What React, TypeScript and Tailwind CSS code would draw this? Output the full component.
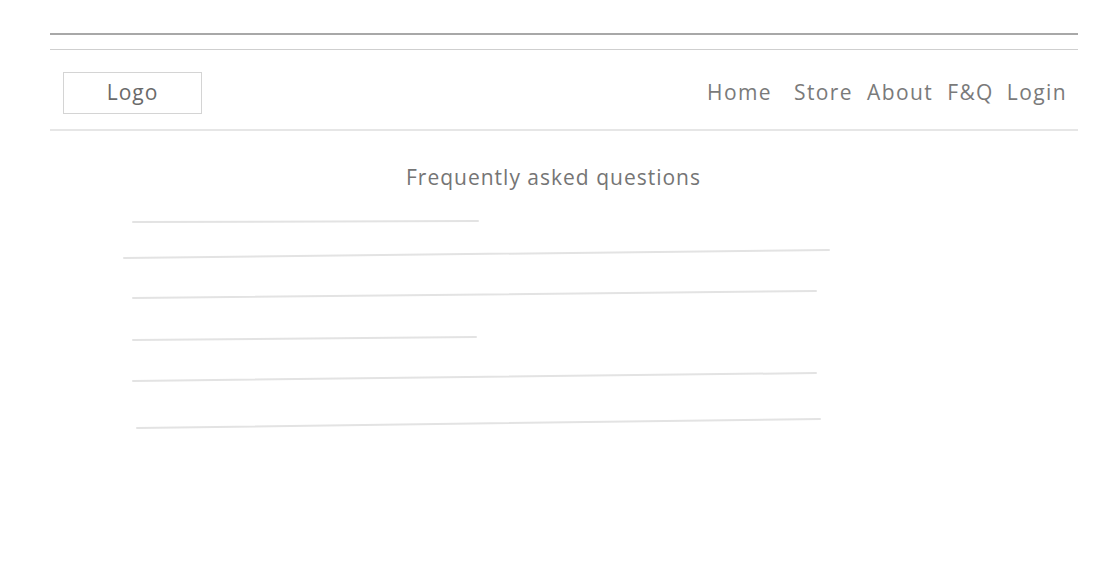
const LINES = [
  { x1: 133, y1: 222, x2: 478, y2: 221 },
  { x1: 124, y1: 258, x2: 829, y2: 250 },
  { x1: 133, y1: 298, x2: 816, y2: 291 },
  { x1: 133, y1: 340, x2: 476, y2: 337 },
  { x1: 133, y1: 381, x2: 816, y2: 373 },
  { x1: 137, y1: 428, x2: 820, y2: 419 },
];

const NAV = [
  { label: "Home", cls: "mr-[22px]" },
  { label: "Store", cls: "mr-[14px]" },
  { label: "About", cls: "mr-[14px]" },
  { label: "F&Q", cls: "mr-[13px]" },
  { label: "Login", cls: "" },
];

export default function App() {
  return (
    <div
      className="w-[1113px] h-[587px] bg-white overflow-hidden text-[#6f6f6f]"
      style={{ fontFamily: '"Open Sans", "Noto Sans", sans-serif' }}
    >
      <div className="ml-[50px] w-[1028px] pt-[33px]">
        {/* double rule at top */}
        <div className="h-[2px] bg-[#a8a8a8]" />
        <div className="mt-[14px] h-px bg-[#cfcfcf]" />

        {/* header */}
        <div className="flex items-center justify-between h-[79px] pt-[7px] pl-[13px] pr-[11px]">
          <div className="w-[139px] h-[42px] border border-[#d4d4d4] flex items-center justify-center text-[21px] tracking-[1px] text-[#6a6a6a]">
            Logo
          </div>
          <nav className="flex items-center text-[21px] tracking-[1.4px] text-[#7a7a7a]">
            {NAV.map((n) => (
              <span key={n.label} className={n.cls}>
                {n.label}
              </span>
            ))}
          </nav>
        </div>
        <div className="h-[2px] bg-[#e6e6e6]" />
      </div>

      {/* content */}
      <div className="pt-[32px] flex justify-center pr-[6px]">
        <h1 className="text-[21px] leading-[28px] tracking-[1px] text-[#757575]">Frequently asked questions</h1>
      </div>

      {/* placeholder sketch lines */}
      <svg width="1113" height="300" viewBox="0 191 1113 300" className="block">
        {LINES.map((l, i) => (
          <line key={i} {...l} stroke="#e3e3e3" strokeWidth="2" strokeLinecap="round" />
        ))}
      </svg>
    </div>
  );
}
